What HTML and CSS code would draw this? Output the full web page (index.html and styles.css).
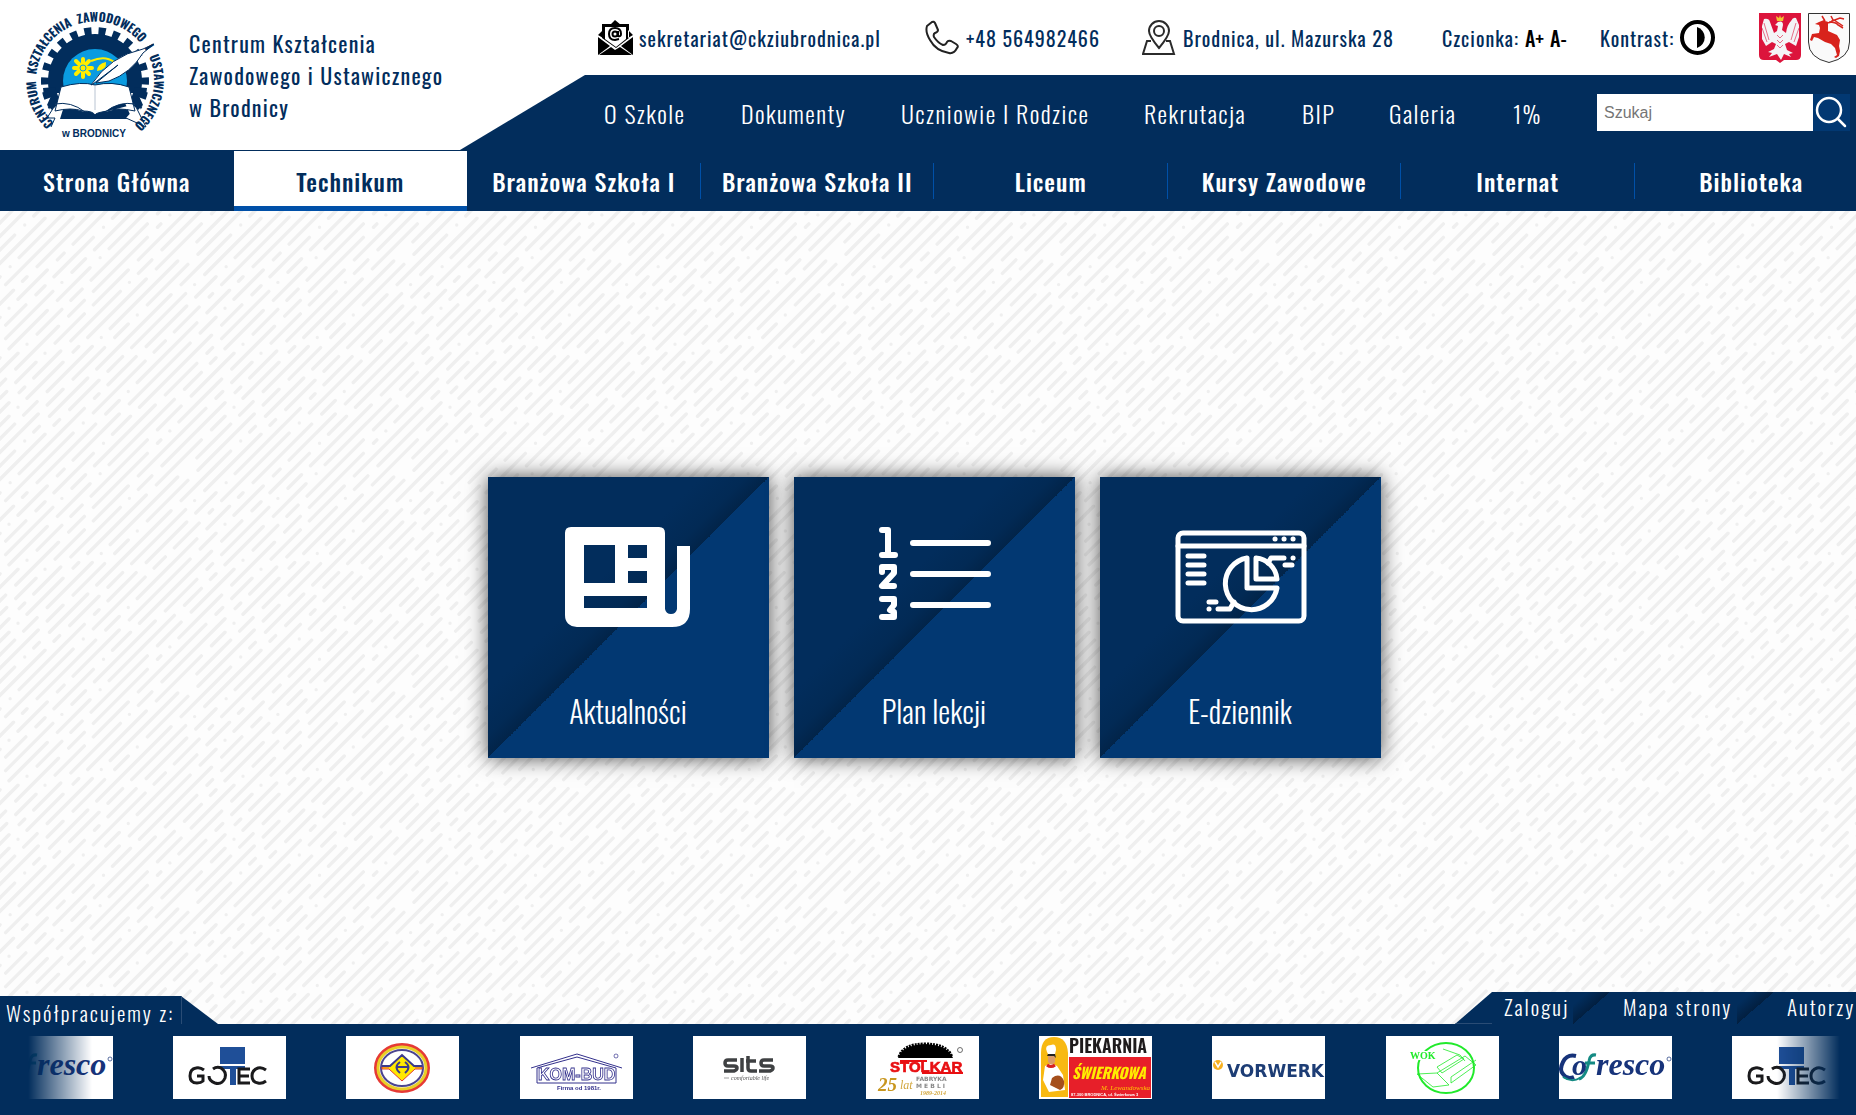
FILE: index.html
```html
<!DOCTYPE html>
<html lang="pl">
<head>
<meta charset="utf-8">
<title>Technikum – Centrum Kształcenia Zawodowego i Ustawicznego w Brodnicy</title>
<meta name="viewport" content="width=device-width, initial-scale=1">
<link rel="stylesheet" href="styles.css">
</head>
<body>
<svg class="defs" aria-hidden="true">
  <defs>
    <g id="gotec">
      <path fill="#1f4f98" d="M47 11h25v17H47zM47 30h25v3h-9v16h-6V33H47z"/>
      <g fill="none" stroke="#1a1a1c" stroke-width="3"><path d="M31 34q-4-3-8-2-6 1-6 8t7 7q4 0 6-2v-5h-6M40 33q4-3 8-1 6 4 4 10-3 7-10 5-6-2-6-7M77 33H66v14h11M66 40h10M93 34q-4-3-8-2-6 2-6 8t6 7q4 1 8-2"/></g>
    </g>
    <g id="cofresco">
      <path fill="none" stroke="#17337a" stroke-width="4" d="M17 20Q8 18 4 26T4 38q4 6 11 3"/>
      <path fill="none" stroke="#148a83" stroke-width="2" d="M4 41q9 6 17 1"/>
      <path fill="none" stroke="#148a83" stroke-width="3" d="M20 43q7-2 10-18 1-7 7-6M26 27h10"/>
      <text x="13" y="39" class="logo-serif" font-size="30" fill="#17337a">o</text>
      <text x="37" y="39" class="logo-serif" font-size="32" fill="#17337a">resco</text>
      <circle cx="110" cy="23" r="2" fill="none" stroke="#17337a" stroke-width=".7"/>
    </g>
  </defs>
</svg>

<header class="header">
  <a class="brand" href="#">
    <svg class="brand-logo" viewBox="0 0 140 128" role="img" aria-label="Logo CKZiU">
      <defs><path id="ring" d="M29 112A59 59 0 1 1 111 112"/></defs>
      <circle cx="70" cy="70" r="39" fill="none" stroke="#022d5c" stroke-width="16"/>
      <circle cx="70" cy="70" r="50" fill="none" stroke="#022d5c" stroke-width="8" pathLength="44" stroke-dasharray="1 1" stroke-dashoffset=".5"/>
      <circle cx="70" cy="70" r="32" fill="#0a9be0"/>
      <path fill="#fff" d="M10 128l22-46h76l22 46z"/>
      <path fill="#022d5c" d="M40 92h60l7 16H35zM30 76l-12 1 1 8 7 0-4 9 5 5 8-8zM110 76l12 1-1 8-7 0 4 9-5 5-8-8z"/>
      <g stroke="#ffed00" stroke-width="4" stroke-linecap="round"><path d="M58 48v18M49 57h18M51 50l13 13M64 50L51 63"/></g>
      <circle cx="58" cy="57" r="3" fill="#ffed00" stroke="#0a9be0"/>
      <path d="M66 50q14-6 23 1" fill="none" stroke="#ffed00" stroke-width="2"/>
      <path fill="#ffed00" d="M72 60q0-7 9-9 1 8-9 9z"/>
      <path fill="#fff" stroke="#022d5c" d="M36 76q20-6 34-2 17-4 34 2l6 24q-18-4-28 0-12 2-12 4-2-4-12-4-12-4-28 0zM30 93q16-3 30 8M110 93q-16-3-30 8M29 96l-7 11h8l-4 9M111 96l10 20-20-9"/>
      <path d="M70 75v24" stroke="#b9c4d2"/>
      <path fill="#fff" stroke="#022d5c" d="M66 74Q85 45 118 38l11-5-11 9Q106 62 84 70l-13 2 22-18-25 19z"/>
      <text class="ring-text"><textPath href="#ring">CENTRUM&nbsp; KSZTAŁCENIA&nbsp; ZAWODOWEGO&nbsp; I&nbsp; USTAWICZNEGO</textPath></text>
      <text x="37" y="126" class="logo-arial" font-size="10" fill="#022d5c">w BRODNICY</text>
    </svg>
    <span class="brand-name">Centrum Kształcenia<br>Zawodowego i Ustawicznego<br>w Brodnicy</span>
  </a>

  <div class="header-right">
    <div class="contact">
      <a class="contact-item" href="mailto:sekretariat@ckziubrodnica.pl">
        <svg class="icon" viewBox="0 0 35 35" aria-hidden="true">
          <path d="M12 5l5-5 6 5zM0 15l5-5v8zM35 15l-5-5v8zM0 17l12 9L0 35zM35 17l-12 9 12 9zM1 35l12-8 4 3 5-3 12 8zM4 4h27v14l-13 10L4 18z"/>
          <path fill="#fff" d="M7 7h21v12l-10 8-11-8z"/>
          <g fill="none" stroke="#000" stroke-width="2"><circle cx="17" cy="14" r="2.500"/><path d="M20 11v5q3 1 3-2 0-6-6-6t-6 6 6 6l4-1"/></g>
        </svg>sekretariat@ckziubrodnica.pl</a>
      <a class="contact-item" href="tel:+48564982466">
        <svg class="icon" viewBox="0 0 35 35" fill="none" stroke="#222" stroke-width="2" stroke-linejoin="round" aria-hidden="true"><path d="M2 6l5-4q2-1 3 1l3 7q0 2-3 3-2 1-1 4 4 6 9 8 3 0 4-3 1-2 4-1l5 3q3 2 1 4-3 6-8 5Q11 31 5 20 0 12 2 6z"/></svg>+48 564982466</a>
      <a class="contact-item" href="#">
        <svg class="icon" viewBox="0 0 35 35" fill="none" stroke="#2b2b2b" stroke-width="2" aria-hidden="true"><path d="M17 28Q7 16 7 11a10 10 0 0 1 20 0q0 5-10 17zM9 21H5L1 34h31l-4-13h-4"/><circle cx="17" cy="11" r="5"/></svg>Brodnica, ul. Mazurska 28</a>
      <div class="contact-item">Czcionka:<span class="sizes"><button type="button" aria-label="Powiększ czcionkę">A+</button><button type="button" aria-label="Zmniejsz czcionkę">A-</button></span></div>
      <div class="contact-item">Kontrast:<button type="button" aria-label="Zmień kontrast"><svg class="icon" viewBox="0 0 35 35" aria-hidden="true"><circle cx="17.500" cy="17.500" r="15.500" fill="#fff" stroke="#000" stroke-width="4"/><path d="M17 7a11 11 0 0 1 0 21z"/></svg></button></div>
      <div class="arms">
        <svg viewBox="0 0 42 50" role="img" aria-label="Godło Polski">
          <path fill="#dc143c" d="M0 0h42v42q0 5-5 5H25l-4 3-4-3H5q-5 0-5-5z"/>
          <path fill="#f4f4f6" d="M19 9q5-2 5 3l-1 5 4 3q1-8 5-12 2-4 5-3l3 7v12l-3 9-7-4-4 2 2 6 6 3-4 1 2 3-7-3-3 6-4-6-8 3 3-4-4-1 6-3 2-5-4-2-6 4-4-7V13l2-7q5-1 6 3l4 11 3-2 1-5-3-1z"/>
          <path fill="none" stroke="#dc143c" stroke-width=".6" d="M5 10l5 17M3 15l5 14M37 10l-5 17M40 15l-5 14M18 22l3 3 3-3M18 27l3 3 3-3M18 32l3 3 3-3"/>
          <path fill="#f2c230" d="M18 8l-1-5 3 2 1-3 1 3 3-2-1 5z"/>
        </svg>
        <svg viewBox="0 0 42 50" role="img" aria-label="Herb Brodnicy">
          <path fill="#fafafa" stroke="#333" d="M.5.5h41V29q0 16-20.500 20.500Q.5 45 .5 29z"/>
          <path fill="#d8231c" d="M11 9l5-2 4 3v8l9 4 3 5-1 6 1 5-1 5-3 2-2-1 3-2-2-7-4-4-6-2-7-4-4-1-2 4-2-1 2-6 7-1 1-5-1-3-4-1z"/>
          <path fill="none" stroke="#d8231c" stroke-width="1.500" d="M17 8l-3-5M18 9q4 2 7-2l-2-4M24 8l8-3 4 1M26 7l9 6M21 9q7 0 9 3l5 3"/>
        </svg>
      </div>
    </div>
    <div class="menu-band">
      <nav class="menu" aria-label="Menu">
        <a href="#">O Szkole</a><a href="#">Dokumenty</a><a href="#">Uczniowie I Rodzice</a><a href="#">Rekrutacja</a><a href="#">BIP</a><a href="#">Galeria</a><a href="#">1%</a>
      </nav>
      <form class="search" role="search">
        <input type="search" placeholder="Szukaj" aria-label="Szukaj">
        <button type="button" aria-label="Wyszukaj"><svg viewBox="0 0 37 37" fill="none" stroke="#fff" stroke-width="2.500" stroke-linecap="round" aria-hidden="true"><circle cx="16" cy="16" r="12"/><path d="M25 25l7 7"/></svg></button>
      </form>
    </div>
  </div>

  <nav class="schools" aria-label="Szkoły">
    <a href="#">Strona Główna</a>
    <a href="#" class="active" aria-current="page">Technikum</a>
    <a href="#">Branżowa Szkoła I</a>
    <a href="#">Branżowa Szkoła II</a>
    <a href="#">Liceum</a>
    <a href="#">Kursy Zawodowe</a>
    <a href="#">Internat</a>
    <a href="#">Biblioteka</a>
  </nav>
</header>

<main class="main">
  <a class="tile" href="#">
    <svg viewBox="0 0 136 110" aria-hidden="true">
      <path fill="#fff" fill-rule="evenodd" d="M11 5h88q6 0 6 6v76q1 5 6 5t6-5V24h13v63q0 18-18 18H17Q5 104 5 93V11q0-6 6-6zM24 23v38h31V23zM68 23v13h19V23zM68 49v12h19V49zM24 74v12h63V74z"/>
    </svg>
    <span>Aktualności</span>
  </a>
  <a class="tile" href="#">
    <svg viewBox="0 0 136 110" fill="none" stroke="#fff" stroke-width="6" stroke-linecap="round" stroke-linejoin="round" aria-hidden="true">
      <path d="M16 8h6v25M16 33h13M16 50v-5h12v6L16 64h12M16 77h12v6l-4 5 4 2v5H16M47 21h75M47 52h75M47 83h75"/>
    </svg>
    <span>Plan lekcji</span>
  </a>
  <a class="tile" href="#">
    <svg viewBox="0 0 136 110" fill="none" stroke="#fff" stroke-width="5" stroke-linecap="round" stroke-linejoin="round" aria-hidden="true">
      <rect x="6" y="11" width="126" height="88" rx="5"/>
      <path d="M6 24h126M103 17h.1M112 17h.1M121 17h.1M16 34h16M16 43h16M16 52h16M16 61h16M37 80h7M37 87h.1M46 87h12l4-7M113 43h7M121 36h.1M112 36H99l-3 5"/>
      <path d="M75 36a26 26 0 1 0 30 30H75zM84 36v21h21a23 23 0 0 0-21-21z"/>
    </svg>
    <span>E-dziennik</span>
  </a>
</main>

<footer class="footer">
  <h2 class="partners-title">Współpracujemy z:</h2>
  <nav class="footer-links" aria-label="Stopka">
    <a href="#">Zaloguj</a><a href="#">Mapa strony</a><a href="#">Autorzy</a>
  </nav>
  <div class="partners">
    <svg viewBox="0 0 113 63" role="img" aria-label="Cofresco"><use href="#cofresco"/></svg>
    <svg viewBox="0 0 113 63" role="img" aria-label="Gotec"><use href="#gotec"/></svg>
    <svg viewBox="0 0 113 63" role="img" aria-label="Partner">
      <ellipse cx="56" cy="32" rx="26" ry="23" fill="#fff" stroke="#e63a35" stroke-width="4"/>
      <ellipse cx="56" cy="32" rx="24" ry="21" fill="none" stroke="#e8cf28" stroke-width="3"/>
      <ellipse cx="56" cy="32" rx="21" ry="18" fill="none" stroke="#4b4590" stroke-width="2"/>
      <path fill="#ffe800" stroke="#e63a35" d="M56 19l13 12h7v2h-7L56 45 43 33h-7v-2h7z"/>
      <path fill="none" stroke="#3b3b8c" stroke-width="2" d="M36 30h8l12-11 12 11h8M54 26q-7 5 0 11M59 26q7 5 0 11M51 31h11"/>
    </svg>
    <svg viewBox="0 0 113 63" role="img" aria-label="Kom-Bud">
      <path fill="none" stroke="#33308c" d="M11 32l46-14 45 14M17 32v15h79V32M17 32l40-11 39 11"/>
      <text x="18" y="44" class="logo-arial" font-size="16" fill="#fff" stroke="#33308c" stroke-width=".8">KOM-BUD</text>
      <text x="37" y="54" class="logo-arial" font-size="6" fill="#33308c">Firma od 1981r.</text>
      <circle cx="96" cy="20" r="2" fill="none" stroke="#33308c" stroke-width=".7"/>
    </svg>
    <svg viewBox="0 0 113 63" role="img" aria-label="Sits">
      <g fill="none" stroke="#3f4143" stroke-width="3.500"><path d="M44 24H35q-3 0-3 3t3 3h6q3 0 3 2t-3 3H31M49 22v14M55 20v12q0 3 3 3h6M53 25h10M80 24H71q-3 0-3 3t3 3h6q3 0 3 2t-3 3H66"/></g>
      <text x="38" y="44" class="logo-serif light" font-size="6" fill="#555">comfortable life</text><path d="M31 42h5" stroke="#777" stroke-width=".7"/>
    </svg>
    <svg viewBox="0 0 113 63" role="img" aria-label="Stolkar">
      <path d="M32 22q4-13 27-14 23 1 28 14z"/><path d="M33 21Q37 8 59 8q22 0 27 13" fill="none" stroke="#000" stroke-width="3" stroke-dasharray="2 1"/>
      <text x="24" y="36" class="logo-arial" font-size="15" fill="#e80f12" stroke="#e80f12" stroke-width=".7">STOLKAR</text><path stroke="#e80f12" stroke-width="2" d="M56 37h41M34 25h27"/>
      <text x="12" y="55" class="logo-serif" font-size="19" fill="#c8961e">25</text>
      <text x="34" y="53" class="logo-serif light" font-size="12" fill="#d2a63c">lat</text>
      <text x="50" y="45" class="logo-wide" font-size="6" fill="#888">FABRYKA</text><text x="50" y="52" class="logo-wide" font-size="6" fill="#888">M E B L I</text>
      <text x="54" y="59" class="logo-serif" font-size="6" fill="#d2a63c">1989-2014</text>
      <circle cx="94" cy="14" r="2.500" fill="none" stroke="#333" stroke-width=".7"/>
    </svg>
    <svg viewBox="0 0 113 63" role="img" aria-label="Piekarnia Świerkowa">
      <path fill="#f8b912" d="M2 61V17Q2 1 15 1t14 16v44z"/><path fill="#e71f29" d="M30 21h82v41H30z"/>
      <text x="30" y="17" class="logo-sans" font-size="18" fill="#1e1b1c">PIEKARNIA</text>
      <text x="33" y="43" class="logo-hand" font-size="15" fill="#ffec00">ŚWIERKOWA</text>
      <text x="62" y="54" class="logo-serif light" font-size="7" fill="#ffc600">M. Lewandowska</text>
      <text x="32" y="60" class="logo-arial" font-size="4" fill="#fff">87-300 BRODNICA, ul. Świerkowa 3</text>
      <path fill="#fff" d="M8 16q-3-7 4-7 5-2 5 5l-1 4H9zM6 30q6-4 12 0l6 9 2 15-16 2-6-12z"/><path fill="#d99b6b" d="M9 18h7v8q-3 5-7 0z"/><path stroke="#d8201f" stroke-width="3" d="M8 29q4 3 8 0" fill="none"/><path fill="#a54f1c" d="M13 42q8-6 12 3 1 7-4 9l-10-5z"/><path fill="#222" d="M8 20l1-2h7l1 4-2-2z"/>
    </svg>
    <svg viewBox="0 0 113 63" role="img" aria-label="Vorwerk">
      <circle cx="6" cy="29" r="5" fill="#f8b11f"/><path d="M3 26l3 5 3-5" fill="none" stroke="#fff" stroke-width="1.500"/>
      <text x="15" y="41" class="logo-wide" font-size="17" fill="#1d3d75">VORWERK</text>
    </svg>
    <svg viewBox="0 0 113 63" role="img" aria-label="WOK">
      <g fill="none" stroke="#21ea2b"><ellipse cx="60" cy="32" rx="28" ry="25" stroke-width="2"/><path stroke-width=".8" d="M31 38l20-1 12 12-16 2zM51 37l28-17 11 9-25 18M51 31l20-12 7 4-22 14zM57 13l17 6 5 6M65 47v-6l25-17"/></g>
      <path fill="#fff" d="M23 15h24v9H23z"/><text x="24" y="23" class="logo-serif upright" font-size="10" fill="#21ea2b">WOK</text>
    </svg>
    <svg viewBox="0 0 113 63" role="img" aria-label="Cofresco"><use href="#cofresco"/></svg>
    <svg viewBox="0 0 113 63" role="img" aria-label="Gotec"><use href="#gotec"/></svg>
  </div>
</footer>
</body>
</html>
```
FILE: styles.css
```css
:root {
  --navy: #022d5c;
  --blue: #023872;
  --accent: #0050a8;
  --narrow: Oswald, "Liberation Sans Narrow", "Roboto Condensed", "Open Sans Condensed", "Liberation Sans", sans-serif;
}

* { box-sizing: border-box; }

body {
  margin: 0;
  min-height: 100vh;
  display: flex;
  flex-direction: column;
  overflow-x: hidden;
  font-family: var(--narrow);
  font-weight: 300;
  color: var(--navy);
  background: #fdfdfd url("data:image/svg+xml,%3Csvg xmlns='http://www.w3.org/2000/svg' xmlns:xlink='http://www.w3.org/1999/xlink' width='216' height='216' viewBox='0 0 192 192'%3E%3Cg id='g' fill='none' stroke='%23efefef' stroke-width='3' stroke-linecap='round'%3E%3Cpath pathLength='576' d='M-192 198L384-378' stroke-dashoffset='17' stroke-dasharray='30 8 12 9 40 8 0 8 60 17'/%3E%3Cpath pathLength='576' d='M-192 210L384-366' stroke-dashoffset='90' stroke-dasharray='12 8 0 9 36 9 50 8 14 9 28 9'/%3E%3Cpath pathLength='576' d='M-192 222L384-354' stroke-dashoffset='31' stroke-dasharray='44 9 0 8 5 9 34 8 66 9'/%3E%3Cpath pathLength='576' d='M-192 234L384-342' stroke-dashoffset='144' stroke-dasharray='5 9 26 8 13 8 48 8 0 9 50 8'/%3E%3Cpath pathLength='576' d='M-192 246L384-330' stroke-dashoffset='62' stroke-dasharray='36 8 18 9 0 8 58 9 4 8 25 9'/%3E%3Cpath pathLength='576' d='M-192 258L384-318' stroke-dashoffset='118' stroke-dasharray='0 9 46 8 10 8 22 9 3 8 60 9'/%3E%3Cpath pathLength='576' d='M-192 270L384-306' stroke-dashoffset='8' stroke-dasharray='20 8 4 9 52 9 12 8 0 8 53 9'/%3E%3Cpath pathLength='576' d='M-192 282L384-294' stroke-dashoffset='77' stroke-dasharray='54 9 14 8 0 8 26 9 6 8 41 9'/%3E%3Cpath pathLength='576' d='M-192 294L384-282' stroke-dashoffset='160' stroke-dasharray='8 8 35 9 0 8 16 8 64 9 18 9'/%3E%3Cpath pathLength='576' d='M-192 306L384-270' stroke-dashoffset='45' stroke-dasharray='28 9 5 8 42 8 0 9 12 8 54 9'/%3E%3Cpath pathLength='576' d='M-192 318L384-258' stroke-dashoffset='103' stroke-dasharray='0 8 58 9 15 8 5 8 34 9 29 9'/%3E%3Cpath pathLength='576' d='M-192 330L384-246' stroke-dashoffset='22' stroke-dasharray='38 8 0 9 22 8 10 8 50 9 21 9'/%3E%3Cpath pathLength='576' d='M-192 342L384-234' stroke-dashoffset='131' stroke-dasharray='14 8 48 9 3 8 0 8 38 9 38 9'/%3E%3Cpath pathLength='576' d='M-192 354L384-222' stroke-dashoffset='69' stroke-dasharray='60 9 6 8 18 8 0 9 26 8 31 9'/%3E%3Cpath pathLength='576' d='M-192 366L384-210' stroke-dashoffset='175' stroke-dasharray='5 8 24 9 44 8 0 8 12 9 56 9'/%3E%3Cpath pathLength='576' d='M-192 378L384-198' stroke-dashoffset='53' stroke-dasharray='40 9 12 8 0 8 32 9 5 8 52 9'/%3E%3C/g%3E%3Cuse xlink:href='%23g' x='192'/%3E%3C/svg%3E");
}

a { color: inherit; text-decoration: none; }
button { border: 0; padding: 0; background: none; font: inherit; color: #000; cursor: pointer; }
svg { display: block; flex: none; }
.defs { position: absolute; width: 0; height: 0; }

.header {
  display: grid;
  grid-template-columns: 460px 1fr;
  background: #fff;
  overflow: hidden;
}

.brand { display: flex; align-items: center; gap: 24px; padding-left: 25px; height: 150px; }
.brand-logo { width: 140px; height: 128px; }
.brand-name { font-size: 22px; font-weight: 400; line-height: 32px; letter-spacing: .055em; white-space: nowrap; }
.ring-text { font: bold 12px var(--narrow); fill: var(--navy); }

.header-right { display: flex; flex-direction: column; min-width: 0; }
.contact {
  display: grid;
  grid-template-columns: 327fr 217fr 300fr 158fr 159fr 91fr;
  align-items: center;
  height: 75px;
  padding: 0 6px 0 138px;
  font-size: 20px;
  font-weight: 400;
  letter-spacing: 1px;
  white-space: nowrap;
}
.contact-item { display: flex; align-items: center; gap: 6px; }
.icon { width: 35px; height: 35px; }
.sizes { display: flex; gap: 6px; font-weight: 500; letter-spacing: 0; }
.arms { display: flex; gap: 7px; }
.arms svg { width: 42px; height: 50px; }

.menu-band {
  display: flex;
  align-items: center;
  height: 75px;
  padding: 0 6px 0 144px;
  background: var(--navy);
  clip-path: polygon(125px 0, 100% 0, 100% 100%, 0 100%);
}
.menu {
  flex: 1;
  display: grid;
  grid-template-columns: 137fr 160fr 243fr 158fr 87fr 124fr 84fr;
  font-size: 24px;
  line-height: 32px;
  letter-spacing: .06em;
  color: #fff;
  white-space: nowrap;
}
.search { display: flex; }
.search input {
  width: 216px;
  height: 37px;
  padding: 0 7px;
  border: 0;
  border-radius: 0;
  appearance: none;
  font: 16px "Liberation Sans", Arial, sans-serif;
}
.search button { width: 37px; height: 37px; background: var(--blue); }

.schools {
  grid-column: 1 / -1;
  display: flex;
  margin-right: -12px;
  padding-top: 1px;
  height: 61px;
  background: var(--navy);
  color: #fff;
  font-size: 24px;
  font-weight: 500;
  letter-spacing: 1px;
  white-space: nowrap;
}
.schools a {
  flex: 1 1 0;
  display: flex;
  align-items: center;
  justify-content: center;
  padding-top: 5px;
  background: linear-gradient(var(--accent), var(--accent)) right 12px / 1px 36px no-repeat;
  border-bottom: 5px solid transparent;
}
.schools .active { background: #fff; color: var(--navy); border-color: var(--accent); }
.schools a:first-child, .schools a:last-child { background: none; }

.main {
  flex: 1;
  display: flex;
  flex-wrap: wrap;
  align-items: center;
  justify-content: center;
  align-content: center;
  gap: 25px;
  padding: 48px 0 48px 12px;
}
.tile {
  width: 281px;
  height: 281px;
  padding-top: 45px;
  display: flex;
  flex-direction: column;
  align-items: center;
  gap: 57px;
  color: #fff;
  font-size: 30px;
  line-height: 44px;
  background: linear-gradient(to bottom right, var(--navy) 38%, #022a55 46%, #022449 50%, var(--blue) 50%);
  box-shadow: 0 0 20px rgba(0, 0, 0, .7);
}
.tile svg { width: 136px; height: 110px; }

.footer { position: relative; padding: 12px 11px 16px 0; background: var(--navy); color: #fff; }
.partners-title {
  position: absolute;
  left: 0;
  bottom: calc(100% - 8px);
  width: 218px;
  height: 36px;
  margin: 0;
  padding-left: 6px;
  background: linear-gradient(#2a4c75, #2a4c75) 181px 0 / 1px 28px no-repeat var(--navy);
  clip-path: polygon(0 0, 181px 0, 100% 28px, 100% 100%, 0 100%);
  font-size: 21px;
  font-weight: 300;
  line-height: 34px;
  letter-spacing: 2px;
  white-space: nowrap;
}
.footer-links {
  position: absolute;
  right: 0;
  bottom: 100%;
  display: grid;
  grid-template-columns: 119px 164px 69px;
  height: 32px;
  padding-left: 49px;
  background: linear-gradient(#2a4c75, #2a4c75) 0 100% / 37px 1px no-repeat var(--navy);
  clip-path: polygon(37px 0, 100% 0, 100% 100%, 0 100%);
  font-size: 21px;
  line-height: 30px;
  letter-spacing: 2px;
  white-space: nowrap;
}
.footer-links a:not(:last-child) {
  background: linear-gradient(to bottom right, transparent 20%, #021f40 50%, transparent 50%) right 13px top / 37px 32px no-repeat;
}
.partners {
  display: flex;
  justify-content: space-between;
  overflow: hidden;
  -webkit-mask-image: linear-gradient(to right, transparent 28px, #000 92px, #000 calc(100% - 68px), transparent calc(100% - 5px));
  mask-image: linear-gradient(to right, transparent 28px, #000 92px, #000 calc(100% - 68px), transparent calc(100% - 5px));
}
.partners svg { width: 113px; height: 63px; background: #fff; }

.logo-sans { font-family: var(--narrow); font-weight: 600; }
.logo-arial { font-family: "Liberation Sans", Arial, sans-serif; font-weight: 700; }
.logo-wide { font-family: "DejaVu Sans", sans-serif; font-weight: 700; }
.logo-serif { font-family: "Liberation Serif", serif; font-weight: 700; font-style: italic; }
.logo-hand { font-family: var(--narrow); font-weight: 700; font-style: italic; }
.logo-serif.light { font-weight: 400; }
.upright { font-style: normal; }
```
